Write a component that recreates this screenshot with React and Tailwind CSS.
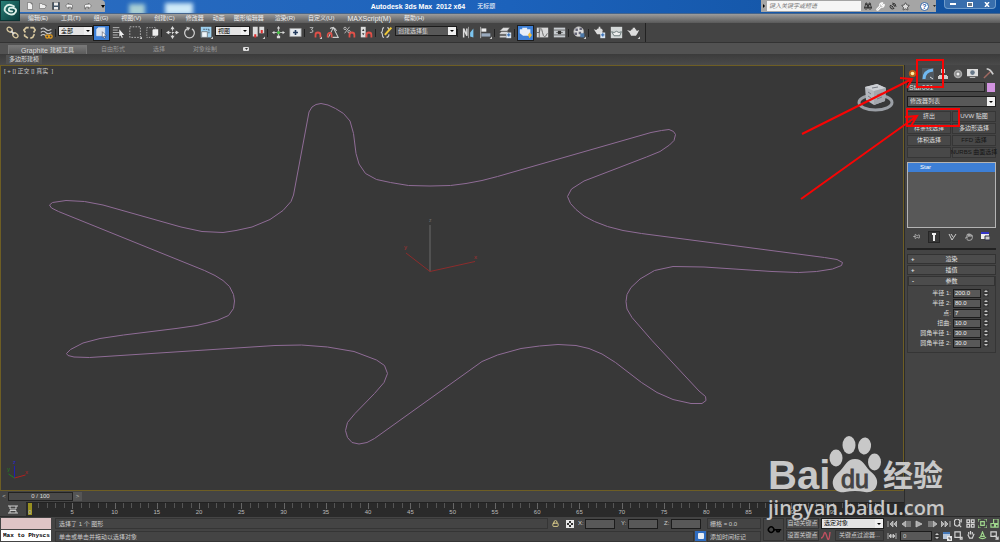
import { Binoculars, Wrench, SatelliteDish, Star, Lock, Hand, Pin, Key } from "lucide-react"

const menus = [
  { label: "编辑(E)" },
  { label: "工具(T)" },
  { label: "组(G)" },
  { label: "视图(V)" },
  { label: "创建(C)" },
  { label: "修改器", tight: true },
  { label: "动画", tight: true },
  { label: "图形编辑器", tight: true },
  { label: "渲染(R)" },
  { label: "自定义(U)" },
  { label: "MAXScript(M)", latin: true },
  { label: "帮助(H)" },
]

const modifierButtons = [
  { label: "挤出" },
  { label: "UVW 贴图" },
  { label: "样条线选择" },
  { label: "多边形选择" },
  { label: "体积选择" },
  { label: "FFD 选择", disabled: true },
  { label: "", disabled: true },
  { label: "NURBS 曲面选择", disabled: true },
]

const params = [
  { id: "radius1", label: "半径 1:", value: "200.0" },
  { id: "radius2", label: "半径 2:", value: "80.0" },
  { id: "points", label: "点:", value: "7" },
  { id: "distortion", label: "扭曲:", value: "10.0" },
  { id: "fillet1", label: "圆角半径 1:", value: "30.0" },
  { id: "fillet2", label: "圆角半径 2:", value: "30.0" },
]

const starPoints =
  "309,112 312,107 316,104.5 321,103.5 328,105 335.5,108.5 343.5,113.5 350,121 353.5,133.5 356,153.5 359,164 365.5,173.5 376.5,179.5 390.5,182.5 408.5,185.5 430,186 450.5,185.5 466,183.5 482,180.5 497.5,176.5 651,132.5 661.5,130.5 669,129.5 673.5,131.5 675.5,134.5 674,140.5 669.5,145 660,151.5 646.5,157 584,181 571.5,189 567.5,196.5 570.5,203.5 576,209.5 584,216 594.5,221.5 607.5,226.5 623,230.5 641.5,233.5 824.5,257.5 837,259.5 842.5,262.5 841.5,265.5 832.5,269 816.5,271.5 798.5,272.5 772,271.5 704,267 673,266.5 654.5,270.5 640,279 631,287.5 627,294.5 626,301.5 627,309 632,317.5 652,340.5 699,391 705.5,396.5 706,400.5 702,403.5 691,403.5 673,399.5 657,392.5 641.5,382.5 615.5,362.5 602,354 589,348.5 576,345.5 558,344.5 539.5,346 521,348.5 497.5,355 482,361.5 374.5,438.5 367,442.5 359,444 352,442.5 347.5,437.5 345.5,430.5 347.5,422.5 355,413.5 374.5,393.5 384,382.5 387.5,373.5 384.5,365.5 376.5,360 354,351.5 327.5,347 301.5,345 275,345.5 89.5,357.5 74,357 68,355.5 66.5,353.5 70.5,349.5 83,343 100,338.5 123.5,335 176,328.5 197,325.5 217,320.5 228.5,315.5 233.5,308.5 234.5,301 233.5,294.5 229.5,286.5 223,280.5 215,275.5 204.5,270.5 58.5,211.5 51.5,208 49.5,205 52.5,202.5 66,200.5 84.5,201.5 103,205 181,227 202,231.5 223,232.5 236,230.5 252,227 270,219.5 283,210.5 291,201.5 293.5,195"

const magnet = <path d="M8 14v-3a3 3 0 0 1 6 0v3" stroke="#e05048" strokeWidth="2.2" />
const corner = <path d="M16 13v3h-3z" fill="#ccc" stroke="none" />

const icons = {
  link: (
    <>
      <ellipse cx="4.500" cy="4.500" rx="3.500" ry="2.600" transform="rotate(40 4.500 4.500)" stroke="#d8c8a0" strokeWidth="1.600" />
      <ellipse cx="11.500" cy="11.500" rx="3.500" ry="2.600" transform="rotate(40 11.500 11.500)" stroke="#d8c8a0" strokeWidth="1.600" />
      <path d="M6 6l4 4" stroke="#ddd" strokeWidth="2" />
    </>
  ),
  unlink: <path d="M7 2H4L1 5l2 3M9 2h4l2 3-2 3M2 10v2l4 3M14 10l-2 4-3 1" stroke="#d8c8a0" strokeWidth="2" />,
  warp: (
    <>
      <path d="M1 4q3-3 6 0t7 0M1 8q3-3 6 0t7 0M1 12q3-3 6 0" stroke="#c8c8c8" strokeWidth="1.4" />
      <circle cx="9" cy="13" r="2" stroke="#e8a020" strokeWidth="1.5" />
      <circle cx="13" cy="13" r="2" stroke="#e8a020" strokeWidth="1.5" />
    </>
  ),
  select: (
    <>
      <path d="M2 4l2-2h8v8l-2 2H2z" fill="#dde4ee" stroke="#fff" strokeWidth=".6" />
      <path d="M9 7l5 5-2.5.2 1.3 2.6-1.3.7-1.3-2.7L9 14z" fill="#fff" stroke="#334" strokeWidth=".6" />
    </>
  ),
  byName: (
    <>
      <path d="M1 2h8M1 5h6M1 8h8M1 11h6M1 14h8" stroke="#ccc" />
      <path d="M9 4l6 7-3 .2 1.4 3-1.3.6-1.3-3L9 13z" fill="#eee" stroke="none" />
    </>
  ),
  rect: (
    <>
      <path d="M1 1h13v13H1z" stroke="#ccc" strokeDasharray="2 1.5" />
      {corner}
    </>
  ),
  crossing: (
    <>
      <path d="M1 2h11v12H1z" stroke="#bbb" strokeDasharray="1.5 1.5" />
      <path d="M8 5l1-1h6v7l-1 1H8z" fill="#eee" stroke="none" />
    </>
  ),
  move: (
    <>
      <path d="M8 3v10M3 8h10" stroke="#ddd" strokeDasharray="3 1" />
      <path d="M8 0l2.5 4h-5zM8 16l2.5-4h-5zM0 8l4-2.5v5zM16 8l-4-2.5v5z" fill="#ddd" stroke="none" />
    </>
  ),
  rotate: (
    <>
      <path d="M5 3.5a6 6 0 1 0 6 0" stroke="#ccc" strokeWidth="1.6" />
      <path d="M4 1l5 1-3 4z" fill="#ccc" stroke="none" />
    </>
  ),
  scale: (
    <>
      <path d="M1 1h13v13H1z" fill="#9ed0ee" stroke="none" />
      <path d="M2 7h7v7H2z" fill="#edf4f8" stroke="#555" strokeWidth=".8" />
      <path d="M4 4h7M11 4v6" stroke="#345" strokeDasharray="2 1" />
      {corner}
    </>
  ),
  pivot: (
    <>
      <path d="M1 1h6v12H1zM9 1h6v8H9z" fill="#ddd" stroke="none" />
      <path d="M4 10v4M12 5v4" stroke="#e03030" strokeWidth="2.500" />
      {corner}
    </>
  ),
  manipulate: (
    <>
      <path d="M8 2v12M2 8h12" stroke="#bbb" strokeWidth="1.5" />
      <circle cx="8" cy="8" r="2" fill="#48c048" stroke="none" />
      <path d="M8 0l2 3H6zM0 8l3-2v4zM16 8l-3-2v4zM6 12h4v3H6z" fill="#ddd" stroke="none" />
    </>
  ),
  keyboard: (
    <>
      <path d="M1 3h14v10H1z" fill="#e4e8ec" stroke="#999" strokeWidth=".8" />
      <path d="M8 5v6M5 8h6" stroke="#223a5c" strokeWidth="2" />
    </>
  ),
  snap: (
    <>
      <path d="M1 2h4L3 4.500q3 .5 1.500 3L1 8" stroke="#ccc" />
      {magnet}
      {corner}
    </>
  ),
  angle: (
    <>
      <path d="M3 14L9 2l6 12H8M5 3q5-3 8 3" stroke="#ccc" strokeWidth="1.300" />
      <path d="M2 14v-3a2.500 2.500 0 0 1 5 0v3" stroke="#e05048" strokeWidth="2" />
    </>
  ),
  percent: (
    <>
      <path d="M8 1L2 9" stroke="#ccc" />
      <circle cx="2.500" cy="3" r="1.500" stroke="#ccc" />
      <circle cx="7.500" cy="7" r="1.500" stroke="#ccc" />
      {magnet}
    </>
  ),
  spinner: (
    <>
      <path d="M1 1h6v13H1z" fill="#ddd" stroke="none" />
      <path d="M2.500 6L4 3.500 5.500 6zM2.500 9L4 11.500 5.500 9z" fill="#333" stroke="none" />
      {magnet}
    </>
  ),
  editSets: (
    <>
      <path d="M5 2Q3 2 3 5t-2 3q2 0 2 3t2 3M9 2q2 0 2 3M8 14q3 0 3-4" stroke="#ccc" strokeWidth="1.300" />
      <path d="M6 11l8-9" stroke="#f0c838" strokeWidth="2.500" />
    </>
  ),
  mirror: (
    <>
      <path d="M2 14V3l4 9V3" stroke="#ddd" strokeWidth="1.800" />
      <path d="M10 13V8l4-5v11z" fill="#7cc4ee" stroke="none" />
      <path d="M8 1v14" stroke="#aaa" />
    </>
  ),
  align: (
    <>
      <path d="M2 1v14" stroke="#ccc" />
      <path d="M3 3h6v4H3z" fill="#eee" stroke="none" />
      <path d="M3 9h11v4H3z" fill="#9aaabd" stroke="none" />
      {corner}
    </>
  ),
  layers: (
    <>
      <path d="M1 6l4-4h8l-3 4zM1 9l2-2h8l-2 3H1zM1 12h8v2H1z" fill="#dedede" stroke="#777" strokeWidth=".5" />
      <path d="M9 8h6v7H9z" fill="#d8e4f0" stroke="none" />
      <path d="M10 11h4M12 9v4" stroke="#3870b8" strokeWidth="1.500" />
    </>
  ),
  ribbon: (
    <>
      <path d="M1 4h3V2h6v2h4v8H5L1 9z" fill="#e8eef6" stroke="none" />
      <path d="M13 8l3 3-3 4-2-4z" fill="#f0c040" stroke="none" />
    </>
  ),
  curve: (
    <>
      <path d="M1 2h14v12H1z" fill="#d8d8d8" stroke="none" />
      <path d="M4 2v12M1 8h3q2-10 4 0t6 1" stroke="#555" />
    </>
  ),
  schematic: (
    <>
      <path d="M1 2h14v12H1z" fill="#c8ccd0" stroke="none" />
      <path d="M1 5h14M1 11h14M4 8h8" stroke="#555" />
      <path d="M6 6h4v4H6z" fill="#333" stroke="none" />
    </>
  ),
  material: (
    <>
      <circle cx="7" cy="7" r="6" fill="#ddd" stroke="#aaa" />
      <path d="M3 3h3v3H3zM8 2h3v3H8zM2 8h3v3H2zM7 7h3v3H7z" fill="#667" stroke="none" />
      <path d="M9 9h5v5H9z" fill="#4c78a8" stroke="none" />
      {corner}
    </>
  ),
  renderSetup: (
    <>
      <path d="M1 4l3 1 2-2h4l2 2-1 5H5L3 7zM7 1h2v2H7z" fill="#ddd" stroke="none" />
      <path d="M9 8h6v7H9z" fill="#d8e4f0" stroke="none" />
      <path d="M10 11h4M12 9v4" stroke="#3870b8" strokeWidth="1.500" />
    </>
  ),
  renderFrame: (
    <>
      <path d="M1 1h14v14H1z" fill="#d4d8d8" stroke="none" />
      <path d="M2 7l3 1q3-3 6 0l3-1-2 5H5z" fill="#eee" stroke="#566" />
    </>
  ),
  render: (
    <>
      <path d="M0 5l4 1 2-2h5l1 2 3-1-2 4-2 3H5L3 8zM7 2h3v2H7z" fill="#ddd" stroke="none" />
      {corner}
    </>
  ),
  newFile: <path d="M3 1h7l3 3v11H3zM10 1v3h3" fill="#f4f4f4" stroke="#555" />,
  open: <path d="M1 13V3h5l1 2h5v2h3l-3 6z" fill="#eee" stroke="#555" />,
  save: (
    <>
      <path d="M1 1h14v14H1z" fill="#456" stroke="#333" />
      <path d="M4 1h8v6H4zM4 10h8v5H4z" fill="#eee" stroke="none" />
    </>
  ),
  undo: <path d="M6 2L1 7l5 5V9h4q2 0 2 4 4-9-3-9H6z" fill="#f4f4f4" stroke="#444" />,
  redo: <path d="M10 2l5 5-5 5V9H6q-2 0-2 4-4-9 3-9h3z" fill="#f4f4f4" stroke="#444" />,
}

function Icon({ name, className = "size-[15px]" }) {
  return (
    <svg viewBox="0 0 16 16" fill="none" className={className} aria-hidden="true">
      {icons[name]}
    </svg>
  )
}

function ToolButton({ name, active }) {
  return (
    <button
      aria-label={name}
      className={
        active
          ? "w-[17px] h-4 flex items-center justify-center bg-[#3d7fd6] border border-[#1d1d1d]"
          : "w-[17px] h-4 flex items-center justify-center"
      }
    >
      <Icon name={name} className="size-[13px] shrink-0" />
    </button>
  )
}

function Separator() {
  return <div className="w-[3px] h-2 border-l border-[#222]" />
}

function Dropdown({ label, value, className, dark }) {
  return (
    <div className={className}>
      <select
        aria-label={label}
        className={
          dark
            ? "block w-full h-full appearance-none pl-[2px] bg-[#585858] border border-[#1c1c1c] text-[#dcdcdc]"
            : "block w-full h-full appearance-none pl-[2px] bg-[#e4e4e4] border border-[#1c1c1c] text-black"
        }
      >
        <option>{value}</option>
      </select>
      <span className="absolute right-px top-px bottom-px w-[8px] bg-[#f0f0f0] flex items-center justify-center pointer-events-none">
        <svg viewBox="0 0 4 2" className="w-1 h-[2px]"><path d="M0 0h4L2 2z" /></svg>
      </span>
    </div>
  )
}

function Spinner() {
  return (
    <button aria-label="step" className="w-[6px] h-2 flex items-center justify-center bg-[#3a3a3a]">
      <svg viewBox="0 0 6 8" className="w-[6px] h-2" fill="#ccc"><path d="M1 3l2-2 2 2zM1 5l2 2 2-2z" /></svg>
    </button>
  )
}

function TitleBar() {
  return (
    <div className="h-[13px] flex bg-linear-to-r from-[#2a6cc0] via-[#1c62bb] to-[#0f4f9c]">
      <div className="w-[85px] h-[12px] bg-[#a9a9a9] rounded-tr-sm flex items-center gap-[5px] pl-[6px]">
        <button aria-label="新建"><Icon name="newFile" className="size-2" /></button>
        <button aria-label="打开"><Icon name="open" className="size-2" /></button>
        <button aria-label="保存"><Icon name="save" className="size-2" /></button>
        <button aria-label="撤消"><Icon name="undo" className="size-[9px]" /></button>
        <button aria-label="重做" className="ml-1"><Icon name="redo" className="size-[9px]" /></button>
        <svg viewBox="0 0 4 3" className="w-1 h-[3px] ml-1"><path d="M0 0h4L2 3z" /></svg>
      </div>
      <div className="flex-1 relative flex items-center justify-center gap-3 text-white overflow-hidden">
        <span className="absolute left-6 top-1 w-4 h-3 bg-[#a9cfd4] blur-[2px]" />
        <span className="absolute left-[60px] top-[3px] w-7 h-3 bg-[#cfeaf8] blur-[2px]" />
        <span className="text-[7px] font-bold whitespace-pre">Autodesk 3ds Max  2012 x64</span>
        <span>无标题</span>
      </div>
      <div className="w-[175px] h-[12px] bg-[#a5a5a5] flex items-center">
        <svg viewBox="0 0 2 4" className="w-[2px] h-1 mx-[2px]"><path d="M0 0v4l2-2z" /></svg>
        <input
          aria-label="搜索"
          placeholder="键入关键字或短语"
          className="w-[94px] h-[10px] px-[2px] bg-[#f6f6f6] italic placeholder:text-[#777]"
        />
        <div className="flex items-center gap-[4px] pl-[3px] text-[#333]">
          <Binoculars className="size-[8px]" strokeWidth={3} />
          <Wrench className="size-[9px] text-white" strokeWidth={3} />
          <SatelliteDish className="size-[8px]" strokeWidth={3} />
          <Star className="size-[9px]" strokeWidth={2} fill="#ddd" />
          <button className="size-[9px] ml-[6px] rounded-full bg-white border border-[#3465a4] text-[7px] leading-[7px] font-bold text-[#2454a4]">?</button>
          <svg viewBox="0 0 4 2" className="w-[3px] h-[2px]"><path d="M0 0h4L2 2z" /></svg>
        </div>
      </div>
      <div className="w-16 pl-2 pr-1 flex">
        <div className="h-[9px] flex-1 flex items-center justify-around rounded-b-sm border border-t-0 border-[#6f9ccb] bg-[#386ead]">
          <button aria-label="最小化" className="w-[6px] h-[2px] bg-white" />
          <button aria-label="还原" className="w-[6px] h-[5px] border border-white bg-[#678]" />
          <button aria-label="关闭">
            <svg viewBox="0 0 6 5" className="w-[6px] h-[5px]" stroke="#fff" strokeWidth="1.500"><path d="M1 0l4 5M5 0L1 5" /></svg>
          </button>
        </div>
      </div>
    </div>
  )
}

function Header() {
  return (
    <header>
      <div className="flex bg-[#5c5c5c]">
        <button aria-label="应用程序" className="w-5 h-[21px] bg-linear-to-br from-[#2a8078] to-[#093c3c] border border-[#0c3434] flex items-center justify-center">
          <svg viewBox="0 0 20 20" className="size-[17px]" fill="none" stroke="#dcefe8" strokeWidth="2.200" strokeLinecap="round">
            <path d="M14 5Q7 1 4 6t4 8q6 2 8-2t-3-5q-5-1-5 2 0 2 4 2" />
          </svg>
        </button>
        <div className="flex-1">
          <TitleBar />
          <nav className="h-[10px] pl-[2px] flex items-center gap-px bg-linear-to-b from-[#9c9c9c] to-[#5a5a5a] border-t border-[#44648c] text-[#f0f0f0]">
            {menus.map((m) => (
              <button
                key={m.label}
                className={m.latin ? "px-[6px] text-[7px]" : m.tight ? "px-[4px]" : "px-[6px]"}
              >
                {m.label}
              </button>
            ))}
          </nav>
        </div>
      </div>
      <div className="h-5 flex items-center pl-1 bg-[#444] border-b border-[#333]">
        <ToolButton name="link" />
        <ToolButton name="unlink" />
        <ToolButton name="warp" />
        <Separator />
        <Dropdown label="选择过滤器" value="全部" className="relative w-[35px] h-[10px] mb-1" />
        <ToolButton name="select" active />
        <ToolButton name="byName" />
        <ToolButton name="rect" />
        <ToolButton name="crossing" />
        <Separator />
        <ToolButton name="move" />
        <ToolButton name="rotate" />
        <ToolButton name="scale" />
        <Dropdown label="参考坐标系" value="视图" className="relative w-[35px] h-[10px] mb-1" />
        <ToolButton name="pivot" />
        <Separator />
        <ToolButton name="manipulate" />
        <ToolButton name="keyboard" />
        <Separator />
        <ToolButton name="snap" />
        <ToolButton name="angle" />
        <ToolButton name="percent" />
        <ToolButton name="spinner" />
        <Separator />
        <ToolButton name="editSets" />
        <Dropdown label="命名选择集" value="创建选择集" dark className="relative w-[62px] h-[10px] mb-1" />
        <Separator />
        <ToolButton name="mirror" />
        <ToolButton name="align" />
        <Separator />
        <ToolButton name="layers" />
        <Separator />
        <ToolButton name="ribbon" active />
        <ToolButton name="curve" />
        <ToolButton name="schematic" />
        <Separator />
        <ToolButton name="material" />
        <Separator />
        <ToolButton name="renderSetup" />
        <ToolButton name="renderFrame" />
        <ToolButton name="render" />
        <div className="w-1 h-full border-r border-[#222]" />
      </div>
      <div className="h-[11px] flex items-end pl-2 bg-[#525252] text-[#999]">
        <button className="w-[79px] h-[9px] flex items-center justify-center bg-linear-to-b from-[#777] to-[#5c5c5c] border border-b-0 border-[#777] text-[#ddd]">
          <span className="text-[7px] mr-[2px]">Graphite</span>建模工具
        </button>
        <button className="h-[9px] ml-[14px]">自由形式</button>
        <button className="h-[9px] ml-7">选择</button>
        <button className="h-[9px] ml-7">对象绘制</button>
        <button aria-label="最小化功能区" className="ml-[26px] mb-[3px] w-[6px] h-1 rounded-[1px] bg-[#ddd] flex items-center justify-center">
          <svg viewBox="0 0 4 2" className="w-[3px] h-[2px]"><path d="M0 0h4L2 2z" /></svg>
        </button>
      </div>
      <div className="h-[11px] pl-[6px] bg-linear-to-b from-[#3b3b3b] to-[#4a4a4a] flex items-center">
        <button className="h-[9px] px-[3px] bg-[#505050] text-[#ddd]">多边形建模</button>
      </div>
    </header>
  )
}

function Viewport() {
  return (
    <div className="relative flex-1 bg-[#383838] border border-[#6e5e24]">
      <span className="absolute left-[3px] top-px text-[#ccc] whitespace-pre">[ + [] 正交 [] 真实  ]</span>
      <svg viewBox="1 66 902 424" className="block w-full" fill="none">
        <polygon points={starPoints} stroke="#8f6c96" strokeWidth="1" />
        <path d="M430 271.500V225" stroke="#606060" strokeWidth="1.300" />
        <path d="M406 253l24 18.500 45-10" stroke="#8c2c2c" />
        <text x="429" y="222" fontSize="5" fill="#707070">z</text>
        <text x="404" y="249" fontSize="6" fill="#a83030">y</text>
        <text x="474" y="259" fontSize="6" fill="#a83030">x</text>
        <path d="M14.500 478v-12" stroke="#2020b0" />
        <path d="M14.500 478l11-3" stroke="#b02020" />
        <path d="M14.500 478l-6-4" stroke="#208020" />
        <text x="13" y="464" fontSize="6" fill="#2828c8">z</text>
        <text x="25" y="474" fontSize="6" fill="#b02020">x</text>
        <text x="7" y="471" fontSize="6" fill="#208020">y</text>
        <ellipse cx="875.500" cy="102.500" rx="16.500" ry="7.500" stroke="#9b9fa5" strokeWidth="3" />
        <path d="M865 87l12-3 9 4-1 13-11 4-8-5z" fill="#b4b7bd" />
        <path d="M865 87l12-3 9 4-12 3z" fill="#cdd0d4" />
        <path d="M874 91v14l11-4 1-13z" fill="#a4a7ad" />
        <path d="M868 92l3 2M868 96l3 2M877 95l5-2M877 99l5-2M872 88l6-1" stroke="#777b84" />
      </svg>
    </div>
  )
}

function Timeline() {
  const frames = Array.from({ length: 101 }, (_, i) => i)
  return (
    <div className="bg-[#444] text-[#bbb]">
      <div className="h-[11px] flex items-center">
        <button className="w-2 h-[9px]">&lt;</button>
        <button className="w-[65px] h-[9px] border border-[#222] bg-[#4a4a4a] leading-[7px] text-[#ddd]">0 / 100</button>
        <button className="w-[9px] h-[9px] bg-[#555]">&gt;</button>
      </div>
      <div className="h-[14px] flex">
        <button aria-label="曲线编辑器" className="w-[26px] flex items-center justify-center">
          <svg viewBox="0 0 10 9" className="w-[10px] h-[9px]" fill="none" stroke="#ccc"><path d="M0 1h10M0 8h10M2 1v3h6V1M2 8V5.500h6V8" /></svg>
        </button>
        <div className="flex-1 flex pl-1 pr-5 bg-[#2a2a2a] border-t border-[#222]">
          {frames.map((f) => (
            <div key={f} className="relative flex-1">
              {f === 0 && <span className="absolute -left-[2px] top-0 w-1 h-[12px] bg-[#989020]" />}
              <span className={f % 5 === 0 ? "block w-px h-[6px] bg-[#666]" : "block w-px h-[5px] bg-[#555]"} />
              {f % 5 === 0 && <span className="absolute -left-2 top-[6px] w-4 text-center leading-[6px]">{f}</span>}
            </div>
          ))}
        </div>
      </div>
    </div>
  )
}

function Rollout({ sign, title, children }) {
  return (
    <div className={children ? "border border-t-0 border-[#353535]" : ""}>
      <button className="relative w-full h-[10px] bg-[#4c4c4c] border border-[#333] flex items-center justify-center text-[#e4e4e4]">
        <span className="absolute left-[3px] font-bold">{sign}</span>
        {title}
      </button>
      {children}
    </div>
  )
}

function CommandPanel() {
  return (
    <aside className="w-24 pl-[2px] pr-1 bg-[#444] border-l border-[#2c2c2c] text-[#ddd]">
      <div className="h-[17px] flex items-center justify-between pl-px pr-[2px]">
        <button aria-label="创建" className="size-[9px]">
          <svg viewBox="0 0 10 10"><circle cx="5" cy="5" r="4" fill="#b86018" /><circle cx="5" cy="5" r="2" fill="#fff0a0" /></svg>
        </button>
        <button aria-label="修改" className="size-3 bg-[#505860]">
          <svg viewBox="0 0 12 12" fill="none"><path d="M2 11Q2 3 11 2" stroke="#70b8f0" strokeWidth="3" /><path d="M8 9l3 2" stroke="#ddd" /></svg>
        </button>
        <button aria-label="层次" className="size-[10px]">
          <svg viewBox="0 0 10 10" fill="#ccc"><path d="M3 0h4v4H3zM0 7h4v3H0zM6 7h4v3H6zM4 4h2v2h3v1H1V6h3z" /></svg>
        </button>
        <button aria-label="运动" className="size-[10px]">
          <svg viewBox="0 0 10 10" fill="none"><circle cx="5" cy="5" r="3.500" fill="#888" stroke="#aaa" strokeWidth="1.500" /><circle cx="5" cy="5" r="1.500" fill="#eee" /></svg>
        </button>
        <button aria-label="显示" className="size-[11px]">
          <svg viewBox="0 0 12 12"><path d="M0 1h12v8H0zM3 10h6v1H3z" fill="#ddd" /><circle cx="6" cy="5" r="2.500" fill="#678" /></svg>
        </button>
        <button aria-label="实用程序" className="size-[11px]">
          <svg viewBox="0 0 12 12" fill="none"><path d="M1 11l7-7" stroke="#a06860" strokeWidth="1.600" /><path d="M4 1q4 0 7 6" stroke="#ccc" strokeWidth="2" /></svg>
        </button>
      </div>
      <div className="flex items-center gap-[2px] h-[10px]">
        <input aria-label="对象名称" defaultValue="Star001" className="w-0 flex-1 h-[10px] pl-px bg-[#585858] border border-[#222] text-[7px] text-[#ddd]" />
        <button aria-label="颜色" className="w-2 h-[9px] mr-px bg-[#d193e0]" />
      </div>
      <Dropdown label="修改器列表" value="修改器列表" dark className="relative h-[11px] mt-1" />
      <div className="grid grid-cols-2 gap-px mt-1">
        {modifierButtons.map((b) => (
          <button
            key={b.label}
            disabled={b.disabled}
            className="h-[11px] flex items-center justify-center bg-[#484848] border border-[#363636] whitespace-nowrap disabled:text-[#151515]"
          >
            {b.label}
          </button>
        ))}
      </div>
      <div className="mt-1 h-[66px] bg-[#585858] border border-[#b4b4b4]">
        <div className="h-[9px] pl-[12px] leading-[9px] bg-[#3d7fd6] text-white">Star</div>
      </div>
      <div className="h-[17px] flex items-center justify-between px-[6px]">
        <button aria-label="锁定堆栈"><Pin className="size-[7px] rotate-90" /></button>
        <button aria-label="显示最终结果" className="size-3 bg-[#383838] border border-[#262626] flex items-center justify-center">
          <svg viewBox="0 0 4 8" className="w-1 h-2" fill="#eee"><path d="M0 0h4v2H3v6H1V2H0z" /></svg>
        </button>
        <button aria-label="使唯一">
          <svg viewBox="0 0 9 8" className="w-[9px] h-2" fill="none" stroke="#ccc"><path d="M1 1l3 6 4-6M3 1l2 3" /></svg>
        </button>
        <button aria-label="移除修改器"><Hand className="size-2" /></button>
        <button aria-label="配置修改器集">
          <svg viewBox="0 0 9 9" className="size-[9px]"><path d="M0 0h8v7H0z" fill="#eee" /><path d="M0 0h8v2H0z" fill="#3434c8" /><path d="M4 4h5v4H4z" fill="#ccc" stroke="#334" /></svg>
        </button>
      </div>
      <div className="border-t-2 border-[#222] mt-[3px] pt-1 flex flex-col gap-px">
        <Rollout sign="+" title="渲染" />
        <Rollout sign="+" title="插值" />
        <Rollout sign="-" title="参数">
          <div className="pt-[2px] pb-1 pr-[6px]">
            {params.map((p) => (
              <div key={p.id} className="h-[10px] flex items-center justify-end gap-[2px]">
                <label htmlFor={p.id}>{p.label}</label>
                <input id={p.id} defaultValue={p.value} className="w-7 h-[9px] pl-px bg-[#585858] border border-[#1c1c1c] text-[#eee]" />
                <Spinner />
              </div>
            ))}
          </div>
        </Rollout>
      </div>
    </aside>
  )
}

const transport = [
  { label: "转至开头", d: "M1 1v6M6 1L3 4l3 3zM10 1L7 4l3 3z" },
  { label: "上一帧", d: "M5 1L1 4l4 3zM7 1v6M9 1v6" },
  { label: "播放", d: "M2 1l6 3-6 3z" },
  { label: "下一帧", d: "M1 1v6M3 1v6M5 1l4 3-4 3z" },
  { label: "转至结尾", d: "M0 1l3 3-3 3zM4 1l3 3-3 3zM9 1v6" },
]

const navTools = [
  { label: "缩放", d: "M1 4a3 2.500 0 1 0 5 0 3 2.500 0 1 0-5 0M5 6l3 3M8 0v4" },
  { label: "缩放所有视图", d: "M1 1h3v3H1zM6 1h3v3H6zM1 6h3v3H1zM6 6h3v3H6z" },
  { label: "最大化显示", d: "M0 3V0h3M7 0h3v3M10 7v3H7M3 10H0V7M3 3h4v4H3z", green: true },
  { label: "所有视图最大化显示", d: "M4 0h5v5H4zM1 5h4v4H1zM6 6h3v3H6z", green: true },
  { label: "缩放区域", d: "M1 1h6v6H1zM7 7h2v2H7z" },
  { label: "平移", d: "M2 4l2 4h3l2-5M3 4V1M5 4V0M7 4V1" },
  { label: "环绕", d: "M1 7q4 3 8 0M5 1L3 6h4z", green: true },
  { label: "最大化视口", d: "M1 1h6v5H1zM5 5l4 4M9 6v3H6" },
]

function NavButton({ tool }) {
  return (
    <button aria-label={tool.label} className="size-3 flex items-center justify-center">
      <svg viewBox="0 0 10 10" className="size-[9px]" fill="none" stroke={tool.green ? "#9fd68c" : "#d4d4d4"} strokeWidth="1.300">
        <path d={tool.d} />
      </svg>
    </button>
  )
}

function StatusBar() {
  return (
    <footer className="h-[26px] flex bg-[#444] border-t border-[#2a2a2a] text-[#ccc]">
      <div className="w-[52px] p-px flex flex-col gap-px">
        <div className="h-[11px] bg-[#dfc4c6]" />
        <input
          aria-label="MAXScript"
          defaultValue="Max to Physcs ("
          className="w-full h-[11px] pl-[2px] bg-white text-black text-[6px] font-['Liberation_Mono','DejaVu_Sans_Mono',monospace] font-bold"
        />
      </div>
      <div className="flex-1 ml-[3px] flex flex-col">
        <div className="h-[13px] flex items-center">
          <p className="flex-1 h-[11px] pl-[3px] leading-[11px] border border-[#353535]">选择了 1 个 图形</p>
          <Lock className="size-[7px] mx-1 text-[#e8d890]" strokeWidth={3} />
          <svg viewBox="0 0 8 8" className="size-2 ml-[3px] mr-1" fill="#333">
            <path d="M0 0h8v8H0z" fill="#e8e8e8" /><path d="M3 1h2v2H3zM1 3h2v2H1zM5 3h2v2H5zM3 5h2v2H3z" />
          </svg>
          {["X", "Y", "Z"].map((axis) => (
            <label key={axis} className="flex items-center">
              <span className="w-[7px]">{axis}:</span>
              <input className="w-[30px] h-[10px] mr-[6px] bg-[#585858] border border-[#1c1c1c]" />
            </label>
          ))}
          <p className="w-[54px] h-[11px] pl-[2px] leading-[10px] border border-[#353535]">栅格 = 0.0</p>
        </div>
        <div className="h-[12px] flex items-center">
          <p className="flex-1 h-[11px] pl-[3px] leading-[11px] border border-[#353535]">单击或单击并拖动以选择对象</p>
          <button aria-label="自适应降级" className="w-[11px] h-[10px] mx-px bg-[#2f6cc0] flex items-center justify-center">
            <span className="size-[6px] bg-[#e8eef6] rounded-[1px]" />
          </button>
          <button className="w-[54px] h-[11px] pl-[2px] text-left leading-[10px] border border-[#353535]">添加时间标记</button>
        </div>
      </div>
      <button aria-label="设置关键点" className="w-[21px] ml-[2px] my-px border border-[#333] flex items-center justify-center">
        <Key className="size-3 rotate-45 text-black" strokeWidth={3} />
      </button>
      <div className="w-[33px] ml-[2px] flex flex-col gap-px pt-px">
        <button className="h-[11px] leading-[9px] border border-[#333] bg-[#4c4c4c] whitespace-nowrap">自动关键点</button>
        <button className="h-[11px] leading-[9px] border border-[#333] bg-[#4c4c4c] whitespace-nowrap">设置关键点</button>
      </div>
      <div className="w-[63px] ml-[2px] flex flex-col gap-px pt-px">
        <Dropdown label="关键点集" value="选定对象" className="relative h-[11px]" />
        <div className="flex h-[11px] gap-1">
          <svg viewBox="0 0 10 10" className="size-[10px]" fill="none"><path d="M0 8Q2 8 3 4t3 3 3-5" stroke="#c05060" strokeWidth="1.300" /></svg>
          <button className="flex-1 leading-[9px] border border-[#333] whitespace-nowrap">关键点过滤器...</button>
        </div>
      </div>
      <div className="w-[66px] ml-[2px]">
        <div className="h-[13px] flex items-center justify-between">
          {transport.map((t) => (
            <button key={t.label} aria-label={t.label} className="w-[12px] flex justify-center">
              <svg viewBox="0 0 10 8" className="w-[10px] h-2" fill="#aaa" stroke="#c8c8c8" strokeWidth=".8"><path d={t.d} /></svg>
            </button>
          ))}
        </div>
        <div className="h-[12px] flex items-center gap-[2px]">
          <button aria-label="关键点模式" className="w-[12px] flex justify-center">
            <svg viewBox="0 0 10 8" className="w-[10px] h-2" fill="#c8c8c8" stroke="#c8c8c8" strokeWidth=".8"><path d="M1 1v6M4 2L2 4l2 2zM6 2l2 2-2 2zM9 1v6M3 4h4" /></svg>
          </button>
          <input aria-label="当前帧" defaultValue="0" className="w-0 flex-1 h-[10px] pl-[2px] bg-[#585858] border border-[#1c1c1c]" />
          <Spinner />
          <button aria-label="时间配置" className="size-[10px]">
            <svg viewBox="0 0 10 10"><path d="M1 1h7v7H1z" fill="#b8c8dc" /><path d="M1 1h7v2H1z" fill="#4478b8" /><path d="M5 5h5v5H5z" fill="#e8e8e8" /><path d="M7 6v2h2" fill="none" stroke="#333" strokeWidth=".8" /></svg>
          </button>
        </div>
      </div>
      <div className="w-[48px] grid grid-cols-4">
        {navTools.map((t) => <NavButton key={t.label} tool={t} />)}
      </div>
    </footer>
  )
}

function Annotations() {
  return (
    <svg viewBox="790 50 210 160" className="absolute right-0 top-[50px] w-[210px] pointer-events-none" fill="none" stroke="#f80404" strokeWidth="2">
      <path d="M917 60h26v27h-26zM907 109h52v17h-52z" />
      <path d="M802 134l110-55M900 78l12 1-5 9M801 199l116-83M905 117l12-1-6 10" />
    </svg>
  )
}

function Watermark() {
  return (
    <div className="absolute right-[54px] bottom-5 w-[178px] text-[#c8c8c8] pointer-events-none">
      <div className="flex items-end h-[58px]">
        <span className="w-[61px] text-[40px] leading-[38px] font-bold">Bai</span>
        <svg viewBox="0 0 54 58" className="w-[54px] h-[58px]" fill="#c8c8c8">
          <ellipse cx="7" cy="22" rx="6.500" ry="8.500" />
          <ellipse cx="20" cy="9" rx="6.500" ry="9" />
          <ellipse cx="35.500" cy="10" rx="6.500" ry="8.500" transform="rotate(8 35.500 10)" />
          <ellipse cx="45.500" cy="26" rx="6.500" ry="8.500" />
          <path d="M26 23c-8 0-9 6-15 12-6 5-8 9-7 14 1 6 7 8 12 7q10-2 20 0c6 1 11-2 12-8 1-5-2-9-7-13-6-6-7-12-15-12z" />
          <text x="12" y="52" fontSize="25" fill="#444" stroke="#444" strokeWidth="1">du</text>
        </svg>
        <span className="text-[30px] leading-[36px] font-bold whitespace-nowrap">经验</span>
      </div>
      <div className="h-7 text-[20px] leading-7 font-['Open_Sans','Noto_Sans',sans-serif] font-semibold whitespace-nowrap">jingyan.baidu.com</div>
    </div>
  )
}

export default function App() {
  return (
    <div className="relative min-h-screen flex flex-col overflow-hidden bg-[#444] text-[6px] leading-[9px] font-['Liberation_Sans','Noto_Sans_CJK_SC',sans-serif]">
      <Header />
      <main className="flex-1 flex">
        <div className="flex-1 min-w-0 flex flex-col">
          <Viewport />
          <Timeline />
        </div>
        <CommandPanel />
      </main>
      <StatusBar />
      <Annotations />
      <Watermark />
    </div>
  )
}
